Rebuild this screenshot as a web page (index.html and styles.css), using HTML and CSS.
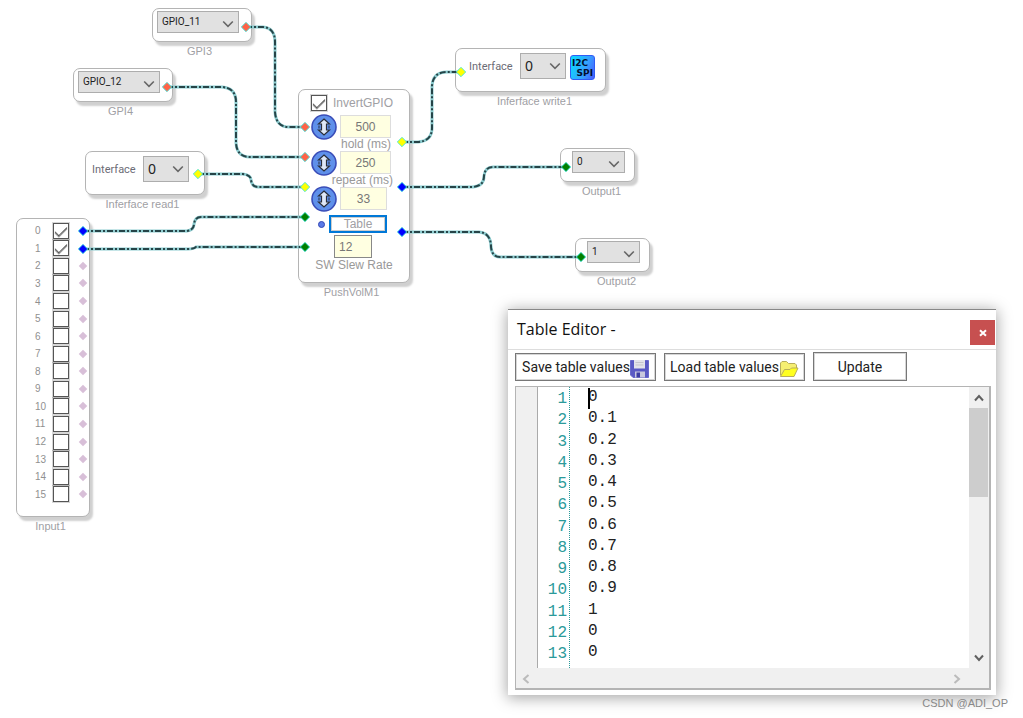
FILE: index.html
```html
<!DOCTYPE html>
<html lang="en">
<head>
<meta charset="utf-8">
<title>Schematic</title>
<link rel="stylesheet" href="styles.css">
</head>
<body>
<svg class="defs" width="0" height="0" aria-hidden="true">
  <defs>
    <symbol id="chev" viewBox="0 0 12 8"><path d="M1.200 1.500 6 6.300 10.800 1.500" fill="none" stroke="currentColor" stroke-width="1.600"/></symbol>
    <symbol id="dial" viewBox="0 0 26 26">
      <circle cx="13" cy="13" r="12" fill="#5f90ea" stroke="#3a4db8" stroke-width="1.600"/>
      <path d="M13 5 18.500 10H15.500V16H18.500L13 21 7.500 16H10.500V10H7.500Z" fill="#dfe8f8" stroke="#2a2f3a" stroke-width="1.200"/>
      <path d="M8 11.500v3M18 11.500v3" stroke="#2a2f3a"/>
    </symbol>
    <symbol id="port" viewBox="-6 -6 12 12"><path d="M0-4.700 4.700 0 0 4.700-4.700 0Z" fill="currentColor" stroke="#4fe8e0" stroke-width="1"/></symbol>
  </defs>
</svg>

<main class="canvas">
  <figure class="node gpi3">
    <div class="box">
      <span class="drop drop-wide"><select aria-label="GPI3 pin"><option>GPIO_11</option></select><svg><use href="#chev"/></svg></span>
    </div>
    <figcaption>GPI3</figcaption>
  </figure>

  <figure class="node gpi4">
    <div class="box">
      <span class="drop drop-wide"><select aria-label="GPI4 pin"><option>GPIO_12</option></select><svg><use href="#chev"/></svg></span>
    </div>
    <figcaption>GPI4</figcaption>
  </figure>

  <figure class="node read">
    <div class="box box-tall">
      <label for="read-if">Interface</label>
      <span class="drop drop-big"><select id="read-if"><option>0</option></select><svg><use href="#chev"/></svg></span>
    </div>
    <figcaption>Inferface read1</figcaption>
  </figure>

  <figure class="node input">
    <div class="box">
      <ul class="pins">
        <li><label for="p0">0</label><input type="checkbox" id="p0" checked></li>
        <li><label for="p1">1</label><input type="checkbox" id="p1" checked></li>
        <li><label for="p2">2</label><input type="checkbox" id="p2"><i class="off"></i></li>
        <li><label for="p3">3</label><input type="checkbox" id="p3"><i class="off"></i></li>
        <li><label for="p4">4</label><input type="checkbox" id="p4"><i class="off"></i></li>
        <li><label for="p5">5</label><input type="checkbox" id="p5"><i class="off"></i></li>
        <li><label for="p6">6</label><input type="checkbox" id="p6"><i class="off"></i></li>
        <li><label for="p7">7</label><input type="checkbox" id="p7"><i class="off"></i></li>
        <li><label for="p8">8</label><input type="checkbox" id="p8"><i class="off"></i></li>
        <li><label for="p9">9</label><input type="checkbox" id="p9"><i class="off"></i></li>
        <li><label for="p10">10</label><input type="checkbox" id="p10"><i class="off"></i></li>
        <li><label for="p11">11</label><input type="checkbox" id="p11"><i class="off"></i></li>
        <li><label for="p12">12</label><input type="checkbox" id="p12"><i class="off"></i></li>
        <li><label for="p13">13</label><input type="checkbox" id="p13"><i class="off"></i></li>
        <li><label for="p14">14</label><input type="checkbox" id="p14"><i class="off"></i></li>
        <li><label for="p15">15</label><input type="checkbox" id="p15"><i class="off"></i></li>
      </ul>
    </div>
    <figcaption>Input1</figcaption>
  </figure>

  <figure class="node volume">
    <div class="box">
      <div class="invert"><input type="checkbox" id="invert" checked><label for="invert">InvertGPIO</label></div>
      <div class="param"><svg class="dial"><use href="#dial"/></svg><input type="text" id="hold" value="500"></div>
      <label class="unit" for="hold">hold (ms)</label>
      <div class="param"><svg class="dial"><use href="#dial"/></svg><input type="text" id="repeat" value="250"></div>
      <label class="unit" for="repeat">repeat (ms)</label>
      <div class="param"><svg class="dial"><use href="#dial"/></svg><input type="text" class="step" aria-label="Step" value="33"></div>
      <div class="table-row"><span class="dot"></span><button type="button">Table</button></div>
      <input class="slew" type="text" id="slew" value="12">
      <label class="slew-label" for="slew">SW Slew Rate</label>
    </div>
    <figcaption>PushVolM1</figcaption>
  </figure>

  <figure class="node write sink">
    <div class="box box-tall">
      <label for="write-if">Interface</label>
      <span class="drop drop-big"><select id="write-if"><option>0</option></select><svg><use href="#chev"/></svg></span>
      <span class="bus"><span>I2C</span><span>SPI</span></span>
    </div>
    <figcaption>Inferface write1</figcaption>
  </figure>

  <figure class="node out1 sink">
    <div class="box">
      <span class="drop drop-small"><select aria-label="Output1 channel"><option>0</option></select><svg><use href="#chev"/></svg></span>
    </div>
    <figcaption>Output1</figcaption>
  </figure>

  <figure class="node out2 sink">
    <div class="box">
      <span class="drop drop-small"><select aria-label="Output2 channel"><option>1</option></select><svg><use href="#chev"/></svg></span>
    </div>
    <figcaption>Output2</figcaption>
  </figure>

  <svg class="wires" width="700" height="300" aria-hidden="true">
    <defs>
      <g id="paths">
        <path d="M246 27H263Q275 28 275 42V112Q276 127 289 127H305"/>
        <path d="M167 87H222Q236 88 236 102V143Q237 157 250 157H305"/>
        <path d="M198 174H243Q251 175 251 180Q252 187 258 187H305"/>
        <path d="M83 231H187Q194 230 194 224Q195 217 201 217H305"/>
        <path d="M83 249H188Q194 249 196 247H305"/>
        <path d="M402 142H418Q432 141 432 128V86Q433 72 447 72H461"/>
        <path d="M402 187H473Q484 186 484 176Q485 167 493 167H566"/>
        <path d="M402 232H479Q491 233 491 247Q492 257 500 257H581"/>
      </g>
    </defs>
    <use href="#paths" class="glow"/>
    <use href="#paths" class="dash"/>
    <g class="ports">
      <use href="#port" x="240" y="21" width="12" height="12" color="#ff6347"/>
      <use href="#port" x="161" y="81" width="12" height="12" color="#ff6347"/>
      <use href="#port" x="192" y="168" width="12" height="12" color="#ff0"/>
      <use href="#port" x="77" y="225" width="12" height="12" color="#00f"/>
      <use href="#port" x="77" y="243" width="12" height="12" color="#00f"/>
      <use href="#port" x="299" y="121" width="12" height="12" color="#ff6347"/>
      <use href="#port" x="299" y="151" width="12" height="12" color="#ff6347"/>
      <use href="#port" x="299" y="181" width="12" height="12" color="#ff0"/>
      <use href="#port" x="299" y="211" width="12" height="12" color="#008000"/>
      <use href="#port" x="299" y="241" width="12" height="12" color="#008000"/>
      <use href="#port" x="396" y="136" width="12" height="12" color="#ff0"/>
      <use href="#port" x="396" y="181" width="12" height="12" color="#00f"/>
      <use href="#port" x="396" y="226" width="12" height="12" color="#00f"/>
      <use href="#port" x="455" y="66" width="12" height="12" color="#ff0"/>
      <use href="#port" x="560" y="161" width="12" height="12" color="#008000"/>
      <use href="#port" x="575" y="251" width="12" height="12" color="#008000"/>
    </g>
  </svg>

  <section class="dialog" role="dialog" aria-labelledby="dlg-title">
    <header>
      <h1 id="dlg-title">Table Editor -</h1>
      <button type="button" class="close" aria-label="Close"><svg width="10" height="10" viewBox="0 0 10 10"><path d="M2 2.200 8 7.800M8 2.200 2 7.800" stroke="#fff" stroke-width="2"/></svg></button>
    </header>
    <div class="tools">
      <button type="button">Save table values<svg width="19" height="18" viewBox="0 0 19 18"><path d="M.5.5H18.500V17.500H3L.5 15Z" fill="#5a5ac4" stroke="#6a6acb"/><path d="M4 0H15V8.500H4Z" fill="#e4e4ea"/><path d="M5.500 2.500H13.500M5.500 5H13.500" stroke="#c5c5cc"/><path d="M5 11.500H15V17.500H5Z" fill="#c8c8dd"/><path d="M6.500 12.500H10V17.500H6.500Z" fill="#3d3da4"/></svg></button>
      <button type="button">Load table values<svg width="20" height="18" viewBox="0 0 20 18"><path d="M1.500 15.500V3L3 1.500H7.500L9.500 3.500H16L17.500 5V8" fill="#f6ef72" stroke="#b9ae5c"/><path d="M1.500 16.500 5.500 9.500H11L12.500 8H19L15 16.500Z" fill="#ffff20" stroke="#b9ae5c"/></svg></button>
      <button type="button" class="update">Update</button>
    </div>
    <div class="editor">
      <div class="view">
        <div class="margin"></div>
        <ol class="lines"><li>1</li><li>2</li><li>3</li><li>4</li><li>5</li><li>6</li><li>7</li><li>8</li><li>9</li><li>10</li><li>11</li><li>12</li><li>13</li></ol>
        <div class="text">
          <span class="caret"></span>
          <textarea aria-label="Table values" rows="13" spellcheck="false">0
0.1
0.2
0.3
0.4
0.5
0.6
0.7
0.8
0.9
1
0
0</textarea>
        </div>
        <div class="vbar">
          <button type="button" class="up" aria-label="Scroll up"><svg viewBox="0 0 10 8"><path d="M1 6.500 5 2 9 6.500"/></svg></button>
          <div class="thumb"></div>
          <button type="button" class="down" aria-label="Scroll down"><svg viewBox="0 0 10 8"><path d="M1 1.500 5 6 9 1.500"/></svg></button>
        </div>
      </div>
      <div class="hbar">
        <button type="button" aria-label="Scroll left"><svg viewBox="0 0 8 10"><path d="M6.500 1 2 5 6.500 9"/></svg></button>
        <button type="button" aria-label="Scroll right"><svg viewBox="0 0 8 10"><path d="M1.500 1 6 5 1.500 9"/></svg></button>
      </div>
    </div>
  </section>

  <p class="mark">CSDN @ADI_OP</p>
</main>
</body>
</html>
```

FILE: styles.css
```css
* { box-sizing: border-box; }
body {
  margin: 0;
  background: #fff;
  font-family: "Liberation Sans", Arial, sans-serif;
  font-size: 12px;
  color: #222;
}
button, input, select, textarea { font: inherit; color: inherit; margin: 0; padding: 0; border-radius: 0; }
svg { display: block; flex: none; }
.defs { position: absolute; }

.canvas { position: relative; min-height: 100vh; overflow: hidden; }

/* Nodes placed on the free canvas */
.node { position: absolute; margin: 0; }
.gpi3 { left: 152px; top: 8px; width: 100px; }
.gpi4 { left: 73px; top: 68px; width: 100px; }
.read { left: 85px; top: 151px; width: 120px; }
.input { left: 16px; top: 218px; width: 74px; }
.volume { left: 298px; top: 89px; width: 112px; }
.write { left: 455px; top: 48px; width: 151px; }
.out1 { left: 560px; top: 148px; width: 75px; }
.out2 { left: 575px; top: 238px; width: 75px; }

.box {
  display: flex;
  min-height: 34px;
  padding: 2px 4px;
  align-items: flex-start;
  background: #fff;
  border: 1px solid #b4b4b4;
  border-radius: 7px;
  box-shadow: 3px 4px 2px #d0d0d0;
}
.box-tall { min-height: 44px; padding: 4px 6px; gap: 4px; color: #6c6c76; }
.box-tall label { width: 47px; font: 11px/28px Roboto, sans-serif; }
.sink .box { padding-left: 11px; }
.sink .box-tall { padding-left: 13px; }
figcaption {
  margin-top: 2px;
  padding-right: 5px;
  text-align: center;
  white-space: nowrap;
  font-size: 11px;
  line-height: 14px;
  color: #a0a0a4;
}
.sink figcaption { padding: 0 0 0 8px; }

.drop { display: flex; position: relative; color: #222; }
.drop select {
  appearance: none;
  width: 100%;
  height: 22px;
  padding: 0 4px 2px;
  background: #e1e1e1;
  border: 1px solid #adadad;
  font: 10px Roboto, sans-serif;
}
.drop svg { position: absolute; right: 5px; bottom: 5px; width: 12px; height: 8px; color: #666; pointer-events: none; }
.drop-wide { width: 82px; }
.drop-small { width: 53px; }
.drop-big { width: 46px; }
.drop-big select { height: 26px; padding: 0 4px 2px; font: 14px "Noto Sans", sans-serif; }
.drop-big svg { bottom: 9px; }

.bus {
  display: flex;
  flex-direction: column;
  width: 25px;
  height: 25px;
  margin-top: 2px;
  padding: 2px 1px;
  border: 1px solid #2f5cf5;
  border-radius: 3px;
  background: linear-gradient(110deg, #08dcff, #35a2ff 60%, #4a5cff);
  font: bold 9px/10px "DejaVu Sans", sans-serif;
  color: #041030;
}
.bus span:last-child { align-self: flex-end; }

input[type="checkbox"] {
  appearance: none;
  display: flex;
  justify-content: center;
  flex: none;
  width: 16px;
  height: 16px;
  border: 1px solid #555;
  box-shadow: 0 0 0 1px #44444438;
  background: #fff;
}
input[type="checkbox"]:checked::before {
  content: "";
  width: 11px;
  height: 5px;
  margin-top: 3px;
  border: solid #444;
  border-width: 0 0 1px 1px;
  transform: rotate(-45deg);
  box-shadow: -1px 1px 0 #55555590;
}

.input .box { padding: 3px 1px 13px; }
.pins {
  display: grid;
  grid-auto-rows: 1fr;
  width: 100%;
  height: 281px;
  margin: 0;
  padding: 0;
  list-style: none;
}
.pins li { display: grid; grid-template-columns: 35px 27px 1fr; align-items: center; }
.pins label { padding-left: 17px; font-size: 10px; color: #909090; }
.off { width: 6px; height: 6px; background: #d8bfd8; transform: rotate(45deg); }

.volume .box { flex-direction: column; padding: 5px 12px 10px; }
.invert { display: flex; align-items: center; gap: 6px; height: 16px; color: #a0a0a4; white-space: nowrap; }
.param { display: flex; align-items: center; gap: 3px; height: 23px; }
.invert + .param { margin-top: 4px; }
.dial { width: 26px; height: 26px; }
.param input, .slew {
  width: 51px;
  height: 23px;
  background: #ffffe1;
  border: 1px solid #ddd;
  text-align: center;
  color: #777;
}
.param .step { width: 47px; }
.unit { align-self: flex-end; margin-right: 4px; line-height: 13px; color: #999; white-space: nowrap; }
.unit[for="hold"] { margin-right: 6px; }
.table-row { display: flex; align-items: center; gap: 4px; margin: 5px 0 2px 7px; }
.dot { width: 7px; height: 7px; border: 1px solid #3347b5; border-radius: 50%; background: #5b7ae6; }
.table-row button { width: 58px; height: 18px; border: 2px solid #0078d7; background: #fff; box-shadow: inset 0 0 0 1px #ccc; line-height: 14px; color: #a0a0a4; }
.slew { width: 38px; margin-left: 23px; padding-left: 4px; border-color: #888; text-align: left; }
.slew-label { align-self: center; line-height: 14px; color: #999; white-space: nowrap; }

.wires { position: absolute; left: 0; top: 0; pointer-events: none; }
.glow, .dash { fill: none; }
.glow { stroke: #8ccccf; stroke-width: 3px; }
.dash { stroke: #0c2226; stroke-width: 2px; stroke-dasharray: 6 2 2 2; stroke-opacity: 0.8; }

/* Table editor window */
.dialog {
  position: absolute;
  left: 508px;
  top: 309px;
  width: 488px;
  border-top: 1px solid #888;
  background: #fff;
  box-shadow: 0 2px 14px 1px #00000059;
}
.dialog header {
  display: flex;
  justify-content: space-between;
  height: 40px;
  padding-left: 9px;
  border-bottom: 1px solid #ddd;
}
.dialog h1 { margin: 0; font: 16px/38px "Open Sans", sans-serif; color: #111; }
.close { display: grid; place-items: center; width: 25px; height: 25px; margin: 10px 1px 0 0; border: 0; background: #c75050; }
.tools { display: flex; align-items: flex-end; gap: 8px; padding: 2px 7px 5px; }
.tools button {
  display: flex;
  align-items: center;
  justify-content: center;
  width: 141px;
  height: 28px;
  border: 1px solid #777;
  outline: 1px solid #7777774d;
  outline-offset: -2px;
  background: #fff;
  font: 14px Roboto, sans-serif;
  white-space: nowrap;
}
.tools svg { margin-top: 4px; }
.tools .update { width: 94px; height: 29px; }

.editor { margin: 0 5px 5px 7px; border: 2px solid #b4b4b4; border-width: 1px 2px 2px 1px; }
.view { display: flex; height: 281px; font: 16px/1.33 "Liberation Mono", monospace; }
.margin { width: 22px; background: #f0f0f0; border-right: 1px solid #aaa; }
.lines { width: 32px; margin: 0; padding: 2px 2px 0 0; list-style: none; text-align: right; color: #2b9a9a; border-right: 1px dotted #2b9a9a; }
.text { position: relative; flex: 1; padding-left: 18px; }
.text textarea { display: block; width: 100%; height: 100%; border: 0; resize: none; overflow: hidden; outline: 0; background: none; color: #222; }
.caret { position: absolute; left: 18px; top: 1px; width: 2px; height: 21px; background: #000; }
.vbar { display: flex; flex-direction: column; width: 20px; background: #f0f0f0; }
.thumb { height: 89px; margin-right: 1px; background: #cdcdcd; }
.vbar button, .hbar button { display: grid; place-items: center; width: 20px; height: 21px; border: 0; background: none; }
.vbar svg { width: 10px; height: 8px; }
.vbar path, .hbar path { fill: none; stroke: #606060; stroke-width: 2px; }
.down { margin-top: auto; }
.hbar { display: flex; justify-content: space-between; height: 20px; padding-right: 22px; background: #f0f0f0; }
.hbar svg { width: 8px; height: 10px; }
.hbar path { stroke: #bbb; }

.mark { position: absolute; right: 15px; bottom: 8px; margin: 0; font-size: 11px; line-height: 14px; color: #888; }
```
